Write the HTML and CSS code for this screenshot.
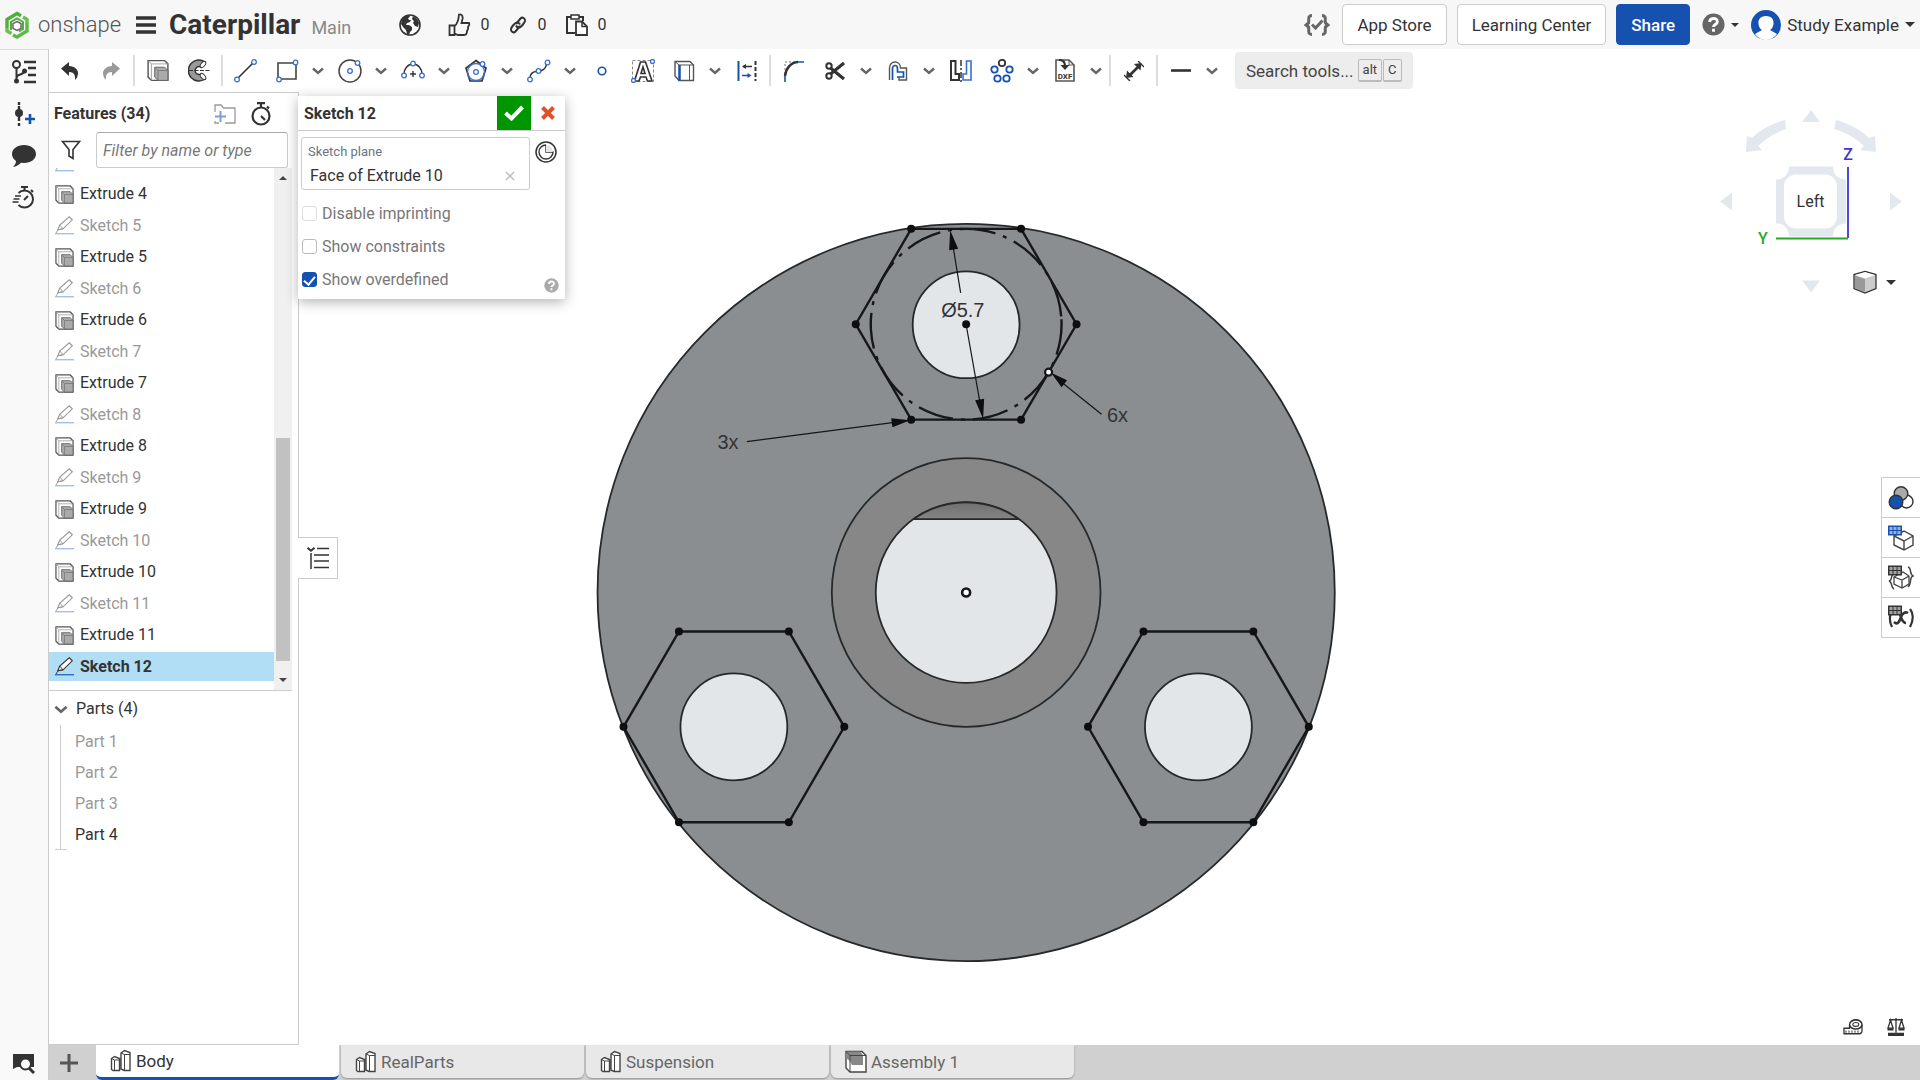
FILE: index.html
```html
<!DOCTYPE html>
<html lang="en">
<head>
<meta charset="utf-8">
<title>Caterpillar | Body</title>
<link rel="stylesheet" href="styles.css">
</head>
<body>
<svg class="defs" aria-hidden="true">
  <symbol id="chev" viewBox="0 0 12 8"><path d="M1 1.500l5 4.500 5-4.500" fill="none" stroke="#666" stroke-width="2.400"/></symbol>
  <symbol id="caret" viewBox="0 0 10 5"><path d="M0 0h10L5 5z" fill="#333"/></symbol>
  <symbol id="extrude" viewBox="0 0 20 20">
    <path d="M1 1h15l3 3v15H4l-3-3z" fill="#fff" stroke="#555" stroke-width="1.300"/>
    <path d="M1 1l3 3v15M4 4h15" fill="none" stroke="#999" stroke-width=".8"/>
    <path d="M7 7h9l3 3v9h-9l-3-3z" fill="#aaa" stroke="#666" stroke-width=".9"/>
    <path d="M7 7l3 3v9M10 10h9" fill="none" stroke="#777" stroke-width=".8"/>
  </symbol>
  <symbol id="sketch" viewBox="0 0 20 20">
    <path d="M3 14.500l2-5L15 .8l3.200 3.200L8.500 13.500z" fill="#fff" stroke="currentColor" stroke-width="1.200"/>
    <path d="M5 9.500l3.500 4M3 14.500l5.500-1M3.500 14l-2.500 4" fill="none" stroke="currentColor"/>
    <path d="M0 18.700h20" stroke="var(--base)" stroke-width="1.200"/>
  </symbol>
  <symbol id="studio" viewBox="0 0 22 24">
    <path d="M1.500 9.500l3-2 5 2v12H3l-1.500-1zM11 4l3.500-2.500L20 3.500v18h-6L11 20z" fill="#fff" stroke="#444" stroke-width="1.400"/>
    <path d="M1.500 9.500l3 1.500h5M4.500 11v10.500M11 4l3.500 1.500H20M14.500 5.500v16" fill="none" stroke="#444"/>
  </symbol>
  <symbol id="help" viewBox="0 0 24 24"><circle cx="12" cy="12" r="11.500" fill="currentColor"/><path d="M8 9.500c0-5 8-5 8-.5 0 3-4 3-4 5.500M12 16.500v3" fill="none" stroke="#fff" stroke-width="3"/></symbol>
  <symbol id="grid" viewBox="0 0 14 10"><path d="M0 0h14v10H0z" fill="currentColor"/><path d="M1.500 1.500h3v3h-3zM5.500 1.500h3v3h-3zM9.500 1.500h3v3h-3zM1.500 5.500h3v3h-3zM5.500 5.500h3v3h-3zM9.500 5.500h3v3h-3z" fill="#fff" opacity=".55"/></symbol>
</svg>

<header class="topbar">
  <a class="brand" href="#" aria-label="Onshape">
    <svg width="24" height="28" viewBox="0 0 24 28"><g fill="none" stroke-width="3.400"><path d="M2 17V8.500L12 2.500l4 2.300" stroke="#4fae3c"/><path d="M8 24l4 2 10-6v-8" stroke="#5cb947"/><path d="M18 6l4 2.500v4M2 17v3l4.500 2.500" stroke="#6cc04a"/><path d="M6 19V11l6-3.500 6 3.500v7l-4 2.500" stroke="#4fae3c" stroke-width="2"/></g><path d="M12 10.500l4 2.200v4.600L12 19.500l-4-2.200v-4.600z" fill="#fff" stroke="#666" stroke-width="1.500"/></svg>
    <span>onshape</span>
  </a>
  <button class="plain burger" aria-label="Menu"><svg width="20" height="18" viewBox="0 0 20 18"><path d="M0 2h20M0 9h20M0 16h20" stroke="#333" stroke-width="3.600"/></svg></button>
  <h1>Caterpillar</h1><span class="branch">Main</span>
  <svg class="globe" width="22" height="22" viewBox="0 0 22 22"><circle cx="11" cy="11" r="10" fill="#fff" stroke="#333" stroke-width="1.600"/><path d="M3 5l3-3 4-1 1 2-2 1 1 2 2 0-1 2-3 1-1 2 3 0 3 2 0 3-2 2-1 3-2-1-1-4-3-3-2-3zM14 2l4 3 2 4-1 4-3-1-2-3 1-2-2-2z" fill="#333"/></svg>
  <button class="plain stat like"><svg width="23" height="24" viewBox="0 0 23 24"><path d="M1.500 12.500h5v9.500h-5zM6.500 13c3-2 4-5 4.500-11.500 3-1 4 2 3.500 4.500l-1 4H21c1 2-.5 3-1 4 .5 2-.5 3-1 4 0 2-1 4-3 4H10l-3.500-1.500" fill="none" stroke="#333" stroke-width="1.800"/></svg>0</button>
  <button class="plain stat link"><svg width="20" height="20" viewBox="0 0 20 20"><g fill="none" stroke="#333" stroke-width="2"><path d="M8 9l4.500-5.500c2-2 5 0 4.500 2.500-.5 2-4 6.500-6 6.500-1.500 0-2.500-.8-3-2"/><path d="M12 11l-4.500 5.500c-2 2-5 0-4.500-2.500.5-2 4-6.500 6-6.500 1.500 0 2.500.8 3 2"/></g></svg>0</button>
  <button class="plain stat copy"><svg width="22" height="22" viewBox="0 0 22 22"><path d="M5 3H1v16h8M13 3h4v4" fill="none" stroke="#333" stroke-width="2"/><path d="M5 1h8v4H5z" fill="#fff" stroke="#333" stroke-width="1.500"/><path d="M10 7.500h6l5 5V21H10z" fill="#fff" stroke="#333" stroke-width="1.800"/><path d="M16 7.500v5h5" fill="none" stroke="#333" stroke-width="1.500"/></svg>0</button>
  <div class="account">
    <button class="plain braces" aria-label="Version status"><svg width="26" height="22" viewBox="0 0 26 22"><g fill="none" stroke="#666" stroke-width="3"><path d="M8 1.500C3 1.500 5.500 6 4.500 9L2 11l2.500 2c1 3-1.500 7.500 3.500 7.500M18 1.500c5 0 2.500 4.500 3.500 7.500L24 11l-2.500 2c-1 3 1.500 7.500-3.500 7.500"/><path d="M8 10.500l3.500 3.500 7-7.500"/></g></svg></button>
    <button class="btn">App Store</button>
    <button class="btn">Learning Center</button>
    <button class="btn share">Share</button>
    <button class="plain helpmenu" aria-label="Help"><svg width="23" height="23"><use href="#help"/></svg><svg width="8" height="4"><use href="#caret"/></svg></button>
    <button class="plain user"><svg width="30" height="30" viewBox="0 0 30 30"><circle cx="15" cy="15" r="15" fill="#1651b0"/><path d="M15 6c6 0 8 4 7.500 8-.5 3-1.500 5-3.500 6l7 4c-4 5-8 6-11 6s-7-1-11-6l7-4c-2-1-3-3-3.500-6C7 10 9 6 15 6z" fill="#fff"/></svg><span>Study Example</span><svg width="10" height="5"><use href="#caret"/></svg></button>
  </div>
</header>

<div class="workspace">
  <nav class="rail" aria-label="Panels">
    <button class="plain" aria-label="Feature tree"><svg width="24" height="24" viewBox="0 0 24 24"><g fill="none" stroke="#333"><circle cx="4.500" cy="4.500" r="3.500" stroke-width="2"/><path d="M4.500 8v12M4.500 18c0-5 7-2 8-7" stroke-width="2"/><path d="M12 2h12M16 8h8M16 15h8M12 22h12" stroke-width="2.400"/></g><circle cx="4.500" cy="21" r="2.500" fill="#333"/><circle cx="12.500" cy="11" r="2.500" fill="#333"/></svg></button>
    <button class="plain" aria-label="Add version"><svg width="24" height="24" viewBox="0 0 24 24"><path d="M7 0v3M7 4v15M7 21v3" stroke="#333" stroke-width="2.400"/><circle cx="7" cy="11" r="4" fill="#333"/><path d="M18 12v10M13 17h10" stroke="#1651b0" stroke-width="2.600"/></svg></button>
    <button class="plain" aria-label="Comments"><svg width="24" height="22" viewBox="0 0 24 22"><path d="M12 0c7 0 12 4 12 9s-5 9-12 9l-3-.3C7 20 4 21.500 1 22c2-2 3-4 3-6C1.500 14 0 12 0 9c0-5 5-9 12-9z" fill="#333"/></svg></button>
    <button class="plain" aria-label="History"><svg width="24" height="24" viewBox="0 0 24 24"><g fill="none" stroke="#333" stroke-width="2"><path d="M6.500 7a8.500 8.500 0 1 1 0 12"/><path d="M9 1h7M12.500 1v3M19 4l2 2M12 14l4-4"/><path d="M3 10h6M1.500 13h6M.5 16h6" stroke-width="1.500"/></g></svg></button>
    <button class="plain rail-end" aria-label="Search document"><svg width="22" height="20" viewBox="0 0 22 20"><path d="M0 0h21v13h-3a6 6 0 0 0-11 0H4l-4 2z" fill="#333"/><circle cx="12.500" cy="10" r="5.500" fill="#f9f9f9" stroke="#333" stroke-width="2"/><path d="M16 14l5 5" stroke="#333" stroke-width="3"/></svg></button>
  </nav>

  <div class="main">
    <div class="toolbar" role="toolbar" aria-label="Sketch tools">
      <button class="tool" aria-label="Undo"><svg width="18" height="18" viewBox="0 0 18 18"><path d="M0 6.500L8 0v4c6 0 9 4 9 7 0 3-1 5-3 7 .5-5-1-8-6-8v4z" fill="#333"/></svg></button>
      <button class="tool" aria-label="Redo"><svg width="18" height="18" viewBox="0 0 18 18"><path d="M18 6.500L10 0v4C4 4 1 8 1 11c0 3 1 5 3 7-.5-5 1-8 6-8v4z" fill="#999"/></svg></button>
      <i class="sep"></i>
      <button class="tool" aria-label="Extrude"><svg width="22" height="23"><use href="#extrude"/></svg></button>
      <button class="tool" aria-label="Revolve"><svg width="22" height="23" viewBox="0 0 22 23"><path d="M17 3A10.500 10.500 0 1 0 17 20l-4-5a4 4 0 1 1 0-7z" fill="#999" stroke="#333" stroke-width="1.400"/><ellipse cx="15" cy="5.500" rx="2" ry="3.600" transform="rotate(40 15 5.500)" fill="#fff" stroke="#333"/><ellipse cx="15" cy="17.500" rx="2" ry="3.600" transform="rotate(-40 15 17.500)" fill="#fff" stroke="#333"/><path d="M1 11.500h21" stroke="#333" stroke-dasharray="4 1.500"/></svg></button>
      <i class="sep"></i>
      <button class="tool" aria-label="Line"><svg width="24" height="24" viewBox="0 0 24 24"><path d="M4 19L19 4" stroke="#333" stroke-width="1.600"/><g class="pt"><circle cx="3" cy="20.500" r="2.300"/><circle cx="20" cy="3" r="2.300"/></g></svg></button>
      <button class="tool" aria-label="Rectangle"><svg width="24" height="24" viewBox="0 0 24 24"><path d="M3 4h18v16H3z" fill="#fff" stroke="#444" stroke-width="1.600"/><g class="pt"><circle cx="20.500" cy="3.500" r="2.300"/><circle cx="4" cy="20.500" r="2.300"/></g></svg></button>
      <button class="more" aria-label="Rectangle options"><svg width="12" height="8"><use href="#chev"/></svg></button>
      <button class="tool" aria-label="Circle"><svg width="24" height="24" viewBox="0 0 24 24"><circle cx="12" cy="12" r="11" fill="#fff" stroke="#444" stroke-width="1.500"/><g class="pt"><circle cx="19.500" cy="4" r="2.300"/><circle cx="12" cy="12" r="2.300"/></g></svg></button>
      <button class="more" aria-label="Circle options"><svg width="12" height="8"><use href="#chev"/></svg></button>
      <button class="tool" aria-label="Arc"><svg width="24" height="24" viewBox="0 0 24 24"><path d="M3 15a9 10 0 0 1 18 0" fill="none" stroke="#333" stroke-width="1.500"/><path d="M12 12v6M9 15h6" stroke="#333" stroke-width="1.400"/><g class="pt"><circle cx="12" cy="4.500" r="2.300"/><circle cx="3" cy="16.500" r="2.300"/><circle cx="21" cy="16.500" r="2.300"/></g></svg></button>
      <button class="more" aria-label="Arc options"><svg width="12" height="8"><use href="#chev"/></svg></button>
      <button class="tool" aria-label="Polygon"><svg width="24" height="24" viewBox="0 0 24 24"><path d="M12 1.500l10 7.500-4 13H6L2 9z" fill="#fff" stroke="#333" stroke-width="1.700"/><g class="pt"><circle cx="12" cy="13" r="8.500" class="thin"/><circle cx="18.500" cy="5" r="2.300"/><circle cx="12" cy="13" r="2.300"/></g></svg></button>
      <button class="more" aria-label="Polygon options"><svg width="12" height="8"><use href="#chev"/></svg></button>
      <button class="tool" aria-label="Spline"><svg width="24" height="24" viewBox="0 0 24 24"><path d="M3 20c0-14 15-1 17-17" fill="none" stroke="#333" stroke-width="1.500"/><g class="pt"><circle cx="3" cy="20.500" r="2.300"/><circle cx="11.500" cy="12" r="2.300"/><circle cx="20.500" cy="3.500" r="2.300"/></g></svg></button>
      <button class="more" aria-label="Spline options"><svg width="12" height="8"><use href="#chev"/></svg></button>
      <button class="tool" aria-label="Point"><svg width="10" height="10" viewBox="0 0 10 10"><circle cx="5" cy="5" r="3.800" fill="#fff" stroke="#1651b0" stroke-width="1.600"/></svg></button>
      <button class="tool" aria-label="Text"><svg width="24" height="24" viewBox="0 0 24 24"><path d="M1.500 1.500h21v21h-21z" fill="none" stroke="#888" stroke-dasharray="3 2"/><path d="M9.500 3h5L21 22h-4.500l-1.500-4H9.500L8 22H3.500zM12 8l-2 6.500h4z" fill="#fff" stroke="#333" stroke-width="1.600"/><g class="pt"><circle cx="21.500" cy="2.500" r="2"/><circle cx="2.500" cy="21.500" r="2"/></g></svg></button>
      <button class="tool" aria-label="Use edges"><svg width="22" height="22" viewBox="0 0 22 22"><path d="M2 1.500h15l3.500 3.500v15.500H6L2 16z" fill="#fff" stroke="#555" stroke-width="1.400"/><path d="M6 5h14.500M16.500 5v15.500M2 1.500L6 5" stroke="#555" fill="none"/><path d="M6.500 5v15.500" stroke="#1651b0" stroke-width="2.500"/></svg></button>
      <button class="more" aria-label="Use options"><svg width="12" height="8"><use href="#chev"/></svg></button>
      <button class="tool" aria-label="Linear constraint"><svg width="20" height="22" viewBox="0 0 20 22"><path d="M1.500 1v20" stroke="#1651b0" stroke-width="2"/><path d="M18.500 1v20" stroke="#333" stroke-width="2" stroke-dasharray="4 2"/><path d="M6 6.500h9" stroke="#333" stroke-width="1.500"/><path d="M5 6.500l4-2.500v5z" fill="#333"/><path d="M5 15.500h6" stroke="#1651b0" stroke-width="1.500"/><path d="M14.500 15.500l-4-2.500v5z" fill="#1651b0"/></svg></button>
      <i class="sep"></i>
      <button class="tool" aria-label="Fillet"><svg width="22" height="22" viewBox="0 0 22 22"><path d="M2 14V2h13" fill="none" stroke="#777" stroke-dasharray="2 2"/><path d="M2 16C3 8 8 2.500 15 2" fill="none" stroke="#333" stroke-width="2.400"/><path d="M2 22v-6M15 2h6" stroke="#1651b0" stroke-width="1.600"/></svg></button>
      <button class="tool" aria-label="Trim"><svg width="20" height="18" viewBox="0 0 20 18"><g fill="none" stroke="#333" stroke-width="2"><circle cx="4" cy="4" r="2.700"/><circle cx="4" cy="14" r="2.700"/></g><path d="M5.500 6L19 17M5.500 12L19 1" stroke="#333" stroke-width="3.200"/></svg></button>
      <button class="more" aria-label="Trim options"><svg width="12" height="8"><use href="#chev"/></svg></button>
      <button class="tool" aria-label="Offset"><svg width="20" height="20" viewBox="0 0 20 20"><path d="M1.500 19V7c0-8 11-8 11 0h6v12H11v-3" fill="none" stroke="#555" stroke-width="1.400"/><path d="M4.500 19V7.500c0-4 5-4 5 0V11h6v5H9" fill="none" stroke="#1651b0" stroke-width="1.700"/></svg></button>
      <button class="more" aria-label="Offset options"><svg width="12" height="8"><use href="#chev"/></svg></button>
      <button class="tool" aria-label="Mirror"><svg width="22" height="22" viewBox="0 0 22 22"><path d="M1 1h4.500v13H9v6H1z" fill="none" stroke="#333" stroke-width="2"/><path d="M21 1h-4.500v13H13v6h8z" fill="none" stroke="#3a70c8" stroke-width="1.600"/><path d="M11 0v22" stroke="#333" stroke-width="1.500" stroke-dasharray="6 2 2 2"/></svg></button>
      <button class="tool" aria-label="Pattern"><svg width="24" height="24" viewBox="0 0 24 24"><g fill="#fff" stroke="#1651b0" stroke-width="1.800"><circle cx="12" cy="4" r="3.200" stroke="#333"/><circle cx="4.500" cy="10.500" r="3.200"/><circle cx="19.500" cy="10.500" r="3.200"/><circle cx="7.500" cy="19.500" r="3.200"/><circle cx="16.500" cy="19.500" r="3.200"/></g></svg></button>
      <button class="more" aria-label="Pattern options"><svg width="12" height="8"><use href="#chev"/></svg></button>
      <button class="tool" aria-label="Import DXF"><svg width="20" height="23" viewBox="0 0 20 23"><path d="M1 1h13l5 5v16H1z" fill="#fff" stroke="#555" stroke-width="1.600"/><path d="M14 1v5h5" fill="none" stroke="#555"/><path d="M4 1c4 0 6 2 6 6" fill="none" stroke="#333" stroke-width="2.200"/><path d="M5.500 6h9L10 11z" fill="#333"/><text x="10" y="20" text-anchor="middle" class="dxf">DXF</text></svg></button>
      <button class="more" aria-label="Import options"><svg width="12" height="8"><use href="#chev"/></svg></button>
      <i class="sep"></i>
      <button class="tool" aria-label="Dimension"><svg width="20" height="20" viewBox="0 0 20 20"><path d="M5 15L15 5" stroke="#333" stroke-width="2.600"/><path d="M2 17l1-7.500 6.500 6.500zM17.500 2l-7.500 1 6.500 6.500z" fill="#333"/><path d="M0 14l6 6M14 0l6 6" stroke="#333" stroke-width="1.400"/></svg></button>
      <i class="sep"></i>
      <button class="tool" aria-label="Line style"><svg width="20" height="3" viewBox="0 0 20 3"><path d="M0 1.500h20" stroke="#333" stroke-width="2.600"/></svg></button>
      <button class="more" aria-label="Line style options"><svg width="12" height="8"><use href="#chev"/></svg></button>
      <button class="search">Search tools...<span class="keys"><kbd>alt</kbd><kbd>C</kbd></span></button>
    </div>

    <div class="content">
      <aside class="features">
        <div class="panel-head">
          <h2>Features (34)</h2>
          <button class="plain" aria-label="New folder"><svg width="22" height="20" viewBox="0 0 22 20"><path d="M1 8V1h6l2.500 3H21v15H11M1 17v2h4" fill="none" stroke="#999" stroke-width="1.300"/><path d="M6.500 7v11M1 12.500h11" stroke="#7a9fdb" stroke-width="2"/></svg></button>
          <button class="plain" aria-label="Rebuild times"><svg width="20" height="24" viewBox="0 0 20 24"><circle cx="10" cy="14" r="8.500" fill="none" stroke="#333" stroke-width="2.200"/><path d="M6 1.200h8M10 1v4M16 4.500l2 2M10 14l4 4" stroke="#333" stroke-width="2.200"/></svg></button>
        </div>
        <div class="filter">
          <svg width="20" height="20" viewBox="0 0 20 20"><path d="M1.500 1.500h17L12 9.500v9l-4-2.500V9.500z" fill="#fff" stroke="#333" stroke-width="1.600"/></svg>
          <input type="text" placeholder="Filter by name or type" aria-label="Filter features">
        </div>
        <div class="list">
          <ul>
            <li class="sk"><svg width="19" height="19"><use href="#sketch"/></svg></li>
            <li><svg width="19" height="19"><use href="#extrude"/></svg>Extrude 4</li>
            <li class="sk"><svg width="19" height="19"><use href="#sketch"/></svg>Sketch 5</li>
            <li><svg width="19" height="19"><use href="#extrude"/></svg>Extrude 5</li>
            <li class="sk"><svg width="19" height="19"><use href="#sketch"/></svg>Sketch 6</li>
            <li><svg width="19" height="19"><use href="#extrude"/></svg>Extrude 6</li>
            <li class="sk"><svg width="19" height="19"><use href="#sketch"/></svg>Sketch 7</li>
            <li><svg width="19" height="19"><use href="#extrude"/></svg>Extrude 7</li>
            <li class="sk"><svg width="19" height="19"><use href="#sketch"/></svg>Sketch 8</li>
            <li><svg width="19" height="19"><use href="#extrude"/></svg>Extrude 8</li>
            <li class="sk"><svg width="19" height="19"><use href="#sketch"/></svg>Sketch 9</li>
            <li><svg width="19" height="19"><use href="#extrude"/></svg>Extrude 9</li>
            <li class="sk"><svg width="19" height="19"><use href="#sketch"/></svg>Sketch 10</li>
            <li><svg width="19" height="19"><use href="#extrude"/></svg>Extrude 10</li>
            <li class="sk"><svg width="19" height="19"><use href="#sketch"/></svg>Sketch 11</li>
            <li><svg width="19" height="19"><use href="#extrude"/></svg>Extrude 11</li>
            <li class="active"><svg width="19" height="19"><use href="#sketch"/></svg>Sketch 12</li>
          </ul>
          <div class="scroll">
            <svg width="8" height="4" viewBox="0 0 8 4"><path d="M0 4l4-4 4 4z" fill="#444"/></svg>
            <i></i>
            <svg width="8" height="4" viewBox="0 0 8 4"><path d="M0 0h8L4 4z" fill="#444"/></svg>
          </div>
        </div>
        <div class="parts">
          <h3><svg width="14" height="9"><use href="#chev"/></svg>Parts (4)</h3>
          <ul>
            <li>Part 1</li><li>Part 2</li><li>Part 3</li><li class="on">Part 4</li>
          </ul>
        </div>
      </aside>

      <section class="viewer">
        <svg class="model" viewBox="299 91 1621 954" role="img" aria-label="Body, left view">
          <defs>
            <g id="hex"><path d="M-55-95.500H55L110.500 0 55 95.500H-55L-110.500 0z" fill="none" stroke="#151718" stroke-width="2.400"/><g fill="#0c0e0f"><circle cx="-55" cy="-95.500" r="4"/><circle cx="55" cy="-95.500" r="4"/><circle cx="110.500" r="4"/><circle cx="55" cy="95.500" r="4"/><circle cx="-55" cy="95.500" r="4"/><circle cx="-110.500" r="4"/></g></g>
            <linearGradient id="flat" x2="0" y2="1"><stop offset="0" stop-color="#707071"/><stop offset="1" stop-color="#858586"/></linearGradient>
          </defs>
          <g stroke="#26292a" stroke-width="1.800">
            <circle cx="966" cy="592" r="369" fill="#8a8e91"/>
            <circle cx="966" cy="592" r="134.500" fill="#878788"/>
            <circle cx="966" cy="592" r="90.500" fill="#e2e6e9"/>
            <path d="M913.500 518.500a90.500 90.500 0 0 1 105 0z" fill="url(#flat)"/>
            <g fill="#e2e6e9"><circle cx="966" cy="324" r="53.500"/><circle cx="733.500" cy="726.500" r="53.500"/><circle cx="1198.500" cy="726.500" r="53.500"/></g>
          </g>
          <use href="#hex" x="966" y="323.500"/><use href="#hex" x="733.500" y="726.500"/><use href="#hex" x="1198.500" y="726.500"/>
          <circle cx="966" cy="323.500" r="95.500" fill="none" stroke="#151718" stroke-width="2.400" stroke-dasharray="36 8 4 8" transform="rotate(-3 966 323.500)"/>
          <g stroke="#151718" stroke-width="1.200"><path d="M951 234l9.500 58M966 324l16 90M746.500 441L900 421M1101.500 413.500L1056 377"/></g>
          <g fill="#0c0e0f"><path d="M950 229.500l-1 20 9-1.500zM983 418l1-20-9 1.500zM910 419.500l-19-2 1.200 9zM1051 372l10.500 14.500 5.500-7z"/><circle cx="966" cy="323.500" r="4"/></g>
          <circle cx="966" cy="592" r="4" fill="#fff" stroke="#151718" stroke-width="2.600"/>
          <circle cx="1048.500" cy="371.500" r="3.500" fill="#fff" stroke="#151718" stroke-width="2.200"/>
          <g class="dim"><text x="941" y="316">Ø5.7</text><text x="717" y="448">3x</text><text x="1107" y="421">6x</text></g>
        </svg>

        <form class="dialog">
          <header><h2>Sketch 12</h2>
            <button type="button" class="accept" aria-label="Accept"><svg width="20" height="16" viewBox="0 0 20 16"><path d="M1.500 8l6 5.500L18.500 2" fill="none" stroke="#fff" stroke-width="4"/></svg></button>
            <button type="button" class="cancel" aria-label="Cancel"><svg width="14" height="14" viewBox="0 0 14 14"><path d="M1.500 1.500l11 11M12.500 1.500l-11 11" stroke="#e0502a" stroke-width="4"/></svg></button>
          </header>
          <div class="plane">
            <div class="field"><span class="cap">Sketch plane</span><div class="value">Face of Extrude 10<button type="button" class="plain" aria-label="Remove"><svg width="10" height="10" viewBox="0 0 10 10"><path d="M1 1l8 8M9 1L1 9" stroke="#bbb" stroke-width="1.300"/></svg></button></div></div>
            <svg class="clock" width="22" height="22" viewBox="0 0 22 22"><circle cx="11" cy="11" r="10" fill="#fff" stroke="#333" stroke-width="1.500"/><path d="M11 4v7h7a7 7 0 1 1-7-7" fill="#fff" stroke="#333" stroke-width="1.400"/><path d="M11 4a7 7 0 0 1 7 7h-7z" fill="#e6e6e6"/></svg>
          </div>
          <label class="dis"><input type="checkbox">Disable imprinting</label>
          <label><input type="checkbox">Show constraints</label>
          <label><input type="checkbox" checked>Show overdefined</label>
          <svg class="dhelp" width="15" height="15"><use href="#help"/></svg>
        </form>

        <button class="outline" aria-label="Feature list"><svg width="22" height="22" viewBox="0 0 22 22"><g fill="none" stroke="#333" stroke-width="1.500"><path d="M10 1.500h12M7 8h15M7 14h15M7 20.500h15M4 6v16"/><path d="M.5.800l3.500 3 3.500-3" stroke-width="2"/></g></svg></button>

        <div class="orient">
          <svg width="184" height="184" viewBox="1718 108 184 184">
            <g fill="#e2e8ee">
              <path d="M1802 122h18l-9-12zM1802 280.500h18l-9 12zM1720 201.500l12-9v18zM1902 201.500l-12-9v18z"/>
              <path d="M1785 120c-14 4-25 10-33 18l-5-2-1 16 16-2-4-4c7-7 17-13 28-17zM1836 120c14 4 25 10 33 18l6-2 1 16-16-2 4-4c-7-7-17-13-30-17z"/>
              <path d="M1789 166.500h44c0 8 5 13 13 13v44c-8 0-13 5-13 13h-44c0-8-5-13-13-13v-44c8 0 13-5 13-13z"/>
            </g>
            <rect x="1784" y="174.500" width="53" height="54" rx="12" fill="#fff"/>
            <text x="1810.500" y="207" text-anchor="middle" class="face">Left</text>
            <path d="M1848 167v71" stroke="#3a35d8" stroke-width="1.800"/><path d="M1776 238.500h72" stroke="#2aa52a" stroke-width="1.800"/>
            <text x="1848" y="160" text-anchor="middle" class="az">Z</text><text x="1763" y="244" text-anchor="middle" class="ay">Y</text>
          </svg>
          <button class="plain shade" aria-label="View options"><svg width="24" height="24" viewBox="0 0 24 24"><path d="M12 1.500l11 3v14L12 23 1 18.500v-14z" fill="#ccc" stroke="#333" stroke-width="1.300"/><path d="M12 2l10 3-10 3.500L2 5z" fill="#fff"/><path d="M2 5.500l10 3.500v13L2 18z" fill="#999"/></svg><svg width="10" height="5"><use href="#caret"/></svg></button>
        </div>

        <div class="side">
          <button aria-label="Appearances"><svg width="26" height="24" viewBox="0 0 26 24"><g stroke="#333" stroke-width="1.400"><circle cx="18.500" cy="15.500" r="6.500" fill="#fff"/><circle cx="13" cy="7.500" r="6.800" fill="#aaa"/><circle cx="8" cy="16" r="6.800" fill="#1651b0"/></g></svg></button>
          <button aria-label="Configurations"><svg width="26" height="26" viewBox="0 0 26 26"><path d="M6 11l10-5 9 5v9l-9 5-10-5zM6 11l10 5 9-5M16 16v9" fill="#fff" stroke="#444" stroke-width="1.400"/><svg width="14" height="11" color="#1651b0"><use href="#grid"/></svg></svg></button>
          <button aria-label="Custom tables"><svg width="26" height="26" viewBox="0 0 26 26"><path d="M6 12l9-5 6 4v8l-7 4-8-4zM6 12l8 3 7-4M14 15v8" fill="#fff" stroke="#444" stroke-width="1.300"/><path d="M5 10c-3 1 0 5-4 6 4 1 1 6 5 8M20 2c4 1 1 7 5 9-4 1-1 8-5 11" fill="none" stroke="#444" stroke-width="1.500"/><svg width="14" height="11" color="#333"><use href="#grid"/></svg></svg></button>
          <button aria-label="Variables"><svg width="26" height="26" viewBox="0 0 26 26"><path d="M3 8c-2 5-1 10 1 14M22 4c4 5 3 12 0 18" fill="none" stroke="#333" stroke-width="2.200"/><path d="M6 17c4 4 6-2 7-5s4-6 7-4M12 9c1 3 2 9 6 9" fill="none" stroke="#333" stroke-width="2.600"/><svg width="14" height="11" color="#333"><use href="#grid"/></svg></svg></button>
        </div>

        <div class="measure">
          <button class="plain" aria-label="Measure"><svg width="20" height="16" viewBox="0 0 20 14" preserveAspectRatio="none"><path d="M6.500 5v3H1v5h14c3 0 4-1 4-3V5" fill="#fff" stroke="#333" stroke-width="1.300"/><ellipse cx="12.800" cy="4.800" rx="6.200" ry="4" fill="#fff" stroke="#333" stroke-width="1.400"/><ellipse cx="12.800" cy="4.800" rx="3" ry="1.700" fill="#fff" stroke="#333"/><path d="M3 12v-2M6 12v-2M9 12v-2M12 12v-2M15 12v-2" stroke="#333"/></svg></button>
          <button class="plain" aria-label="Mass properties"><svg width="18" height="18" viewBox="0 0 18 16" preserveAspectRatio="none"><path d="M2 1.500h14M9 0v13M3.500 2L1 9h5zM14.500 2L12 9h5z" fill="none" stroke="#333" stroke-width="1.300"/><path d="M.5 9h6v2h-6zM11.500 9h6v2h-6zM1 13h16v3H1z" fill="#333"/></svg></button>
        </div>
      </section>
    </div>

    <footer class="tabs">
      <button class="plain add" aria-label="Add tab"><svg width="18" height="18" viewBox="0 0 18 18"><path d="M9 0v18M0 9h18" stroke="#555" stroke-width="3"/></svg></button>
      <a href="#" class="tab current"><svg width="22" height="24"><use href="#studio"/></svg>Body</a>
      <a href="#" class="tab"><svg width="22" height="24"><use href="#studio"/></svg>RealParts</a>
      <a href="#" class="tab"><svg width="22" height="24"><use href="#studio"/></svg>Suspension</a>
      <a href="#" class="tab"><svg width="22" height="24" viewBox="0 0 22 24"><path d="M1 1.500h16l4 4V22H5l-4-4z" fill="#fff" stroke="#444" stroke-width="1.400"/><path d="M1 1.500h14l3 3.500v10H7L5 11 1 8z" fill="#888"/><path d="M1 1.500l4 4V22M5 5.500h16" fill="none" stroke="#444"/></svg>Assembly 1</a>
    </footer>
  </div>
</div>
</body>
</html>
```
FILE: styles.css
```css
* { box-sizing: border-box; }
body { margin: 0; height: 100vh; display: flex; flex-direction: column; overflow: hidden; font: 16px/20px Roboto, "Liberation Sans", sans-serif; color: #333; background: #fff; }
button { font: inherit; color: inherit; padding: 0; border: 0; background: none; display: flex; align-items: center; justify-content: center; flex: none; }
svg { flex: none; display: block; }
ul { list-style: none; margin: 0; padding: 0; }
h1, h2, h3 { margin: 0; }
a { color: inherit; text-decoration: none; }
.defs { position: absolute; width: 0; height: 0; }

.topbar { flex: none; height: 49px; display: flex; align-items: center; padding: 0 5px; background: #f7f7f7; }
.brand { display: flex; align-items: center; gap: 9px; font: 300 22px/28px Roboto, sans-serif; color: #555; width: 131px; }
.topbar h1 { font-size: 28px; line-height: 32px; margin-left: 13px; }
.branch { font-size: 18px; color: #888; margin: 6px 47px 0 11px; width: 41px; }
.stat { gap: 9px; }
.like { margin-left: 27px; width: 43px; justify-content: flex-start; }
.link { margin-left: 17px; width: 40px; justify-content: flex-start; }
.copy { margin-left: 18px; width: 40px; justify-content: flex-start; }
.account { margin-left: auto; display: flex; align-items: center; font-size: 17px; }
.braces { margin-right: 12px; }
.btn { height: 41px; padding: 0 14px; border: 1px solid #ccc; border-radius: 4px; background: #fff; margin-right: 10px; }
.share { background: #1651b0; border-color: #1651b0; color: #fff; font-weight: 500; margin-right: 12px; }
.helpmenu { gap: 6px; margin-right: 12px; color: #666; }
.user { gap: 6px; }

.workspace { flex: 1; min-height: 0; display: flex; }
.rail { flex: none; width: 49px; display: flex; flex-direction: column; align-items: center; gap: 18px; padding: 10px 0 4px; background: #f9f9f9; border-right: 1px solid #ccc; border-top: 1px solid #ddd; }
.rail button { height: 24px; }
.rail .rail-end { margin-top: auto; }
.main { flex: 1; min-width: 0; display: flex; flex-direction: column; }

.toolbar { flex: none; height: 43px; display: flex; align-items: center; }
.tool { width: 41px; height: 40px; }
.more { width: 22px; height: 40px; }
.sep { width: 2px; height: 31px; margin: 0 2px; background: #ddd; flex: none; }
.pt circle { fill: #fff; stroke: #3a6fce; stroke-width: 1.300; }
.pt .thin { fill: none; }
.dxf { font: 700 8px Roboto, sans-serif; fill: #333; }
.search { height: 37px; margin-left: 12px; padding: 0 11px; border-radius: 4px; background: #ededed; color: #444; gap: 4px; font-size: 17px; }
.keys { display: flex; gap: 1px; }
kbd { font: 13px/18px Roboto, sans-serif; border: 1px solid #bbb; border-bottom-width: 2px; border-radius: 2px; padding: 1px 4px; }

.content { flex: 1; min-height: 0; display: flex; }
.features { flex: none; width: 250px; border: 1px solid #ccc; border-left: 0; display: flex; flex-direction: column; }
.panel-head { display: flex; align-items: center; gap: 15px; height: 39px; padding: 3px 27px 0 5px; }
.panel-head h2 { font-size: 16px; line-height: 20px; margin-right: auto; }
.filter { display: flex; align-items: center; gap: 15px; padding: 0 10px 0 12px; }
.filter input { flex: 1; min-width: 0; height: 36px; border: 1px solid #ccc; border-top-color: #aaa; border-radius: 3px; padding: 0 6px; font: italic 16px/20px Roboto, sans-serif; }
.filter input::placeholder { color: #777; }
.list { flex: none; height: 523px; width: 243px; display: flex; border-bottom: 1px solid #ccc; }
.list ul { flex: 1; display: flex; flex-direction: column; justify-content: flex-end; overflow: hidden; padding-bottom: 9px; }
.list li { flex: none; height: 32px; display: flex; align-items: center; gap: 6px; padding-left: 6px; --base: #8fb0e8; }
.list .sk { height: 31px; color: #999; }
.list .active { height: 29px; margin-top: 1px; background: #b1ddf5; font-weight: 700; --base: #1651b0; }
.scroll { width: 18px; background: #f0f0f0; display: flex; flex-direction: column; align-items: center; justify-content: space-between; padding: 8px 0; }
.scroll i { width: 14px; height: 223px; margin-top: 240px; background: #c1c1c1; }
.parts h3 { font-size: 16px; font-weight: 400; line-height: 20px; display: flex; align-items: center; gap: 8px; padding: 8px 5px 6px; }
.parts ul { margin-left: 11px; border-left: 1px solid #ccc; padding-left: 14px; padding-top: 1px; position: relative; }
.parts ul::after { content: ""; position: absolute; left: -6px; bottom: 0; width: 12px; height: 1px; background: #ccc; }
.parts li { line-height: 31px; color: #999; }
.parts .on { color: #333; }

.viewer { flex: 1; min-width: 0; position: relative; }
.model { width: 100%; height: 100%; }
.dim { font: 20px "Liberation Sans", sans-serif; fill: #333; }
.dialog { position: absolute; left: -1px; top: 4px; width: 267px; height: 203px; background: #fff; box-shadow: 0 3px 12px rgba(0,0,0,.3); display: flex; flex-direction: column; }
.dialog header { height: 35px; display: flex; border-bottom: 1px solid #ccc; }
.dialog h2 { flex: 1; font-size: 16px; line-height: 36px; padding-left: 6px; }
.accept { width: 34px; background: #009600; }
.cancel { width: 34px; }
.plane { display: flex; gap: 5px; padding: 6px 3px 7px; }
.field { width: 229px; height: 53px; border: 1px solid #ccc; border-radius: 3px; padding: 5px 14px 0 6px; }
.cap { display: block; font-size: 13px; line-height: 18px; color: #6a7580; }
.value { display: flex; justify-content: space-between; padding-left: 2px; line-height: 30px; }
.clock { margin-top: 4px; }
.dialog label { display: flex; align-items: center; height: 33px; gap: 5px; padding-left: 4px; color: #777; }
.dialog input { appearance: none; margin: 0; width: 15px; height: 15px; border: 1px solid #bbb; border-radius: 3px; background: #fff; }
.dialog .dis input { border-color: #ddd; }
.dialog input:checked { border-color: #1651b0; background: #1651b0; display: grid; place-items: center; }
.dialog input:checked::after { content: ""; width: 5px; height: 9px; border: solid #fff; border-width: 0 2px 2px 0; transform: rotate(40deg); }
.dhelp { position: absolute; right: 6px; bottom: 6px; color: #aaa; }
.outline { position: absolute; left: -1px; top: 445px; width: 40px; height: 42px; background: #fff; border: 1px solid #ccc; border-left: 0; }
.orient { position: absolute; right: 18px; top: 16px; display: flex; flex-direction: column; }
.shade { gap: 9px; align-self: flex-end; margin: -22px 6px 0 0; }
.side { position: absolute; right: 0; top: 385px; width: 39px; border: solid #ccc; border-width: 1px 0 0 1px; background: #fff; }
.side button { width: 100%; height: 40px; border-bottom: 1px solid #ccc; }
.measure { position: absolute; right: 15px; bottom: 9px; display: flex; align-items: center; gap: 24px; }
.face { font: 16px Roboto, sans-serif; fill: #333; }
.az, .ay { font: 500 16px Roboto, sans-serif; fill: #3a35d8; }
.ay { fill: #2aa52a; }

.tabs { flex: none; height: 35px; display: flex; align-items: flex-start; gap: 2px; background: #d0d0d0; }
.add { width: 40px; height: 35px; margin-right: 5px; }
.tab { width: 243px; height: 33px; display: flex; align-items: center; gap: 4px; padding-left: 14px; background: #e8e8e8; color: #666; border-radius: 0 0 6px 6px; box-shadow: 0 1px 2px rgba(0,0,0,.3); font-size: 17px; }
.current { height: 35px; background: #fff; color: #333; border-bottom: 3px solid #1651b0; box-shadow: none; }
```
